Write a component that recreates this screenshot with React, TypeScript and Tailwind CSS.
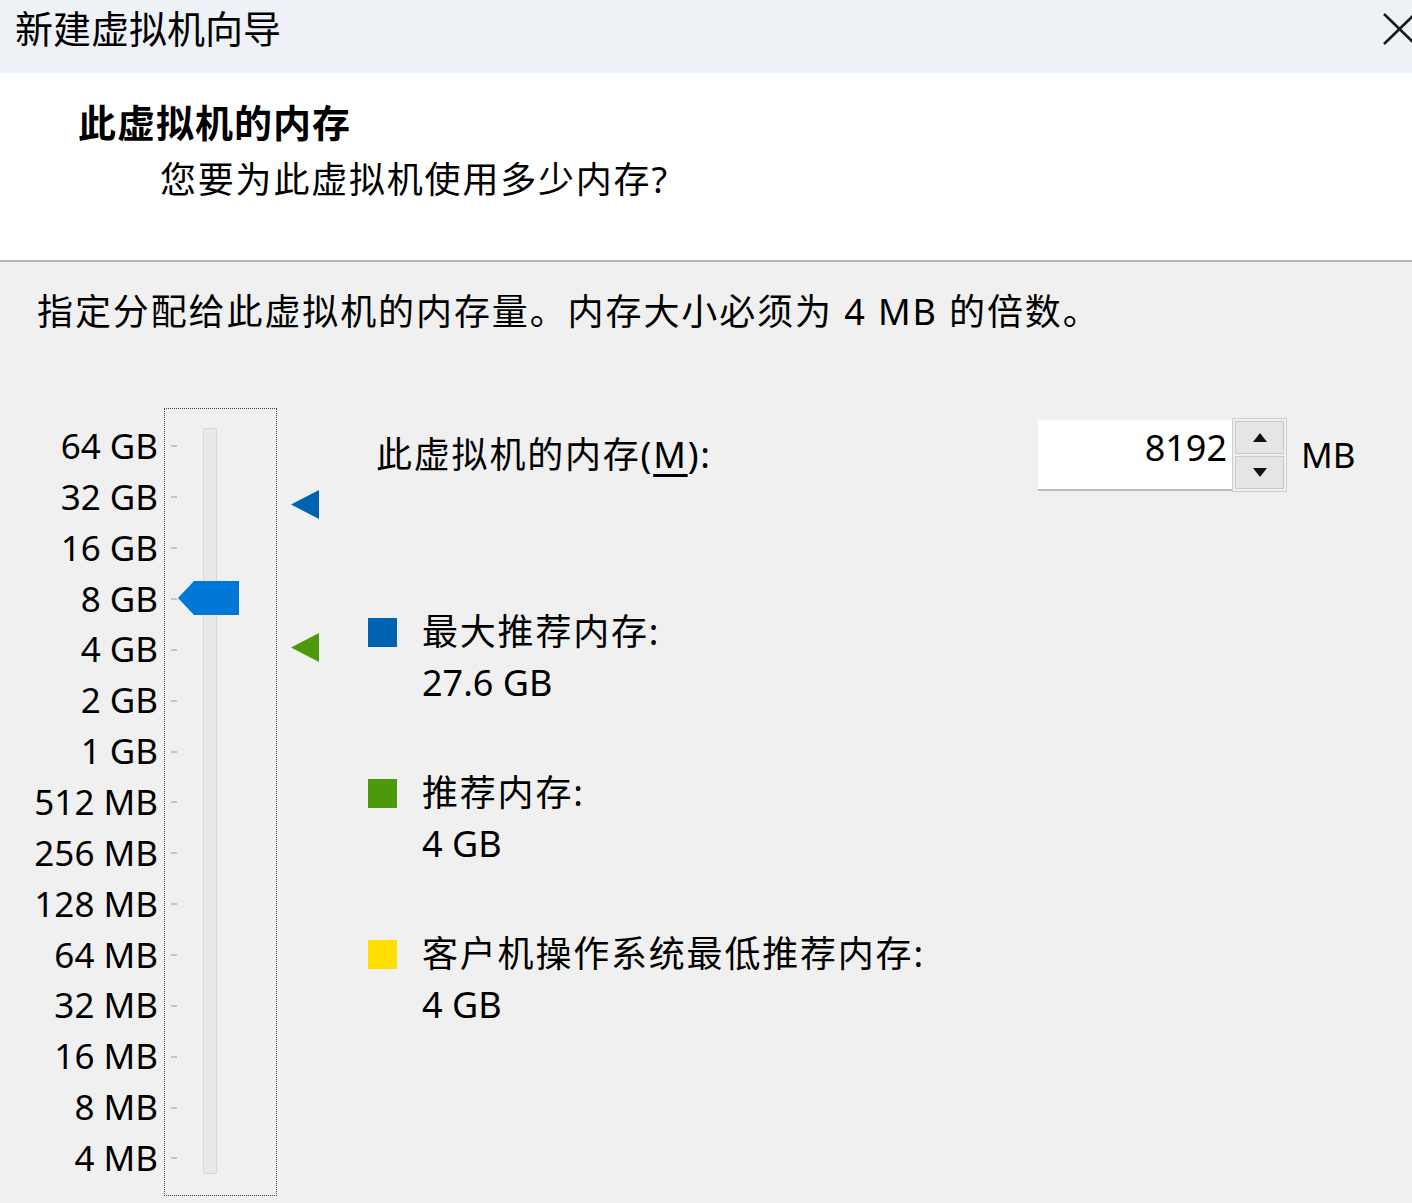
import React from "react";

const scale = [
  "64 GB",
  "32 GB",
  "16 GB",
  "8 GB",
  "4 GB",
  "2 GB",
  "1 GB",
  "512 MB",
  "256 MB",
  "128 MB",
  "64 MB",
  "32 MB",
  "16 MB",
  "8 MB",
  "4 MB",
];

const legend = [
  { color: "bg-[#0063b1]", label: "最大推荐内存:", value: "27.6 GB" },
  { color: "bg-[#4c9a0b]", label: "推荐内存:", value: "4 GB" },
  { color: "bg-[#ffdf00]", label: "客户机操作系统最低推荐内存:", value: "4 GB" },
];

function Marker({ color }: { color: string }) {
  return (
    <svg width="28" height="29" viewBox="0 0 28 29">
      <polygon points="0,14.5 28,0 28,29" fill={color} />
    </svg>
  );
}

export default function App() {
  return (
    <div className="w-[1412px] h-[1203px] overflow-hidden bg-[#f0f0f0] text-black font-['Noto_Sans','Noto_Sans_CJK_SC',sans-serif]">
      {/* title bar */}
      <div className="h-[73px] bg-[#eef2f7] flex items-start justify-between pl-[15px]">
        <div className="text-[38px] leading-[56px]">新建虚拟机向导</div>
        <svg className="mt-[13px] -mr-[4px]" width="33" height="32" viewBox="0 0 33 32">
          <path d="M1 1 L32 31 M32 1 L1 31" stroke="#1a1a1a" strokeWidth="2.6" />
        </svg>
      </div>

      {/* header */}
      <div className="h-[187px] bg-white pt-[25px]">
        <div className="pl-[78px] text-[38px] leading-[48px] font-bold tracking-[1px]">此虚拟机的内存</div>
        <div className="pl-[160px] mt-[10px] text-[36px] leading-[48px] tracking-[1.8px]">
          您要为此虚拟机使用多少内存?
        </div>
      </div>
      <div className="h-[2px] bg-[#b4b4b4]" />

      {/* body */}
      <div className="pt-[26px]">
        <div className="pl-[37px] text-[36px] leading-[48px] tracking-[1.9px]">
          指定分配给此虚拟机的内存量。内存大小必须为 4 MB 的倍数。
        </div>

        <div className="mt-[72px] flex">
          {/* scale labels */}
          <div className="w-[158px] pt-[13px] flex flex-col items-end">
            {scale.map((s) => (
              <div key={s} className="h-[50.86px] leading-[50.86px] text-[35px] whitespace-nowrap">
                {s}
              </div>
            ))}
          </div>

          {/* slider */}
          <div className="ml-[6px] w-[113px] h-[788px] border border-dotted border-[#444] relative">
            <div className="pt-[12px] flex flex-col">
              {scale.map((s) => (
                <div key={s} className="h-[50.86px] flex items-center pl-[6px]">
                  <div className="w-[6px] h-[2px] bg-[#c4c4c4]" />
                </div>
              ))}
            </div>
            <div className="absolute left-[38px] top-[19px] w-[14px] h-[746px] bg-[#e8eaea] border border-[#d6d8d8]" />
            <svg
              className="absolute left-[13px] top-[171px]"
              width="61"
              height="36"
              viewBox="0 0 61 36"
            >
              <polygon points="0,18 16,1 61,1 61,35 16,35" fill="#0078d7" />
            </svg>
          </div>

          {/* markers */}
          <div className="ml-[14px] w-[28px] h-[788px] relative">
            <div className="absolute left-0 top-[82px]">
              <Marker color="#0063b1" />
            </div>
            <div className="absolute left-0 top-[225px]">
              <Marker color="#4c9a0b" />
            </div>
          </div>

          {/* right side */}
          <div className="ml-[49px] flex flex-col">
            <div className="mt-[10px] h-[74px] flex items-center">
              <div className="w-[670px] pl-[8px] text-[36px] leading-[48px] whitespace-nowrap tracking-[1.8px]">
                此虚拟机的内存(<span className="underline underline-offset-[6px]">M</span>):
              </div>
              <div className="flex items-start h-[74px]">
                <div className="mt-[2px] w-[194px] h-[71px] bg-white border-b-2 border-[#bcbcbc] flex justify-end pr-[5px]">
                  <span className="text-[36px] leading-[52px] pt-[2px]">8192</span>
                </div>
                <div className="w-[55px] h-[74px] border border-[#cdcdcd] p-[2px] flex flex-col gap-[2px] bg-[#f0f0f0]">
                  <div className="flex-1 bg-[#e5e5e5] border border-[#c9c9c9] flex items-center justify-center">
                    <svg width="14" height="9" viewBox="0 0 14 9">
                      <polygon points="7,0 14,9 0,9" fill="#111" />
                    </svg>
                  </div>
                  <div className="flex-1 bg-[#e5e5e5] border border-[#c9c9c9] flex items-center justify-center">
                    <svg width="14" height="9" viewBox="0 0 14 9">
                      <polygon points="0,0 14,0 7,9" fill="#111" />
                    </svg>
                  </div>
                </div>
                <div className="ml-[14px] text-[35px] leading-[74px]">MB</div>
              </div>
            </div>

            <div className="mt-[114px] flex flex-col gap-[59px]">
              {legend.map((l) => (
                <div key={l.label} className="flex items-start">
                  <div className={`mt-[12px] w-[29px] h-[29px] ${l.color}`} />
                  <div className="ml-[25px] text-[36px] leading-[51px]">
                    <div className="tracking-[1.8px]">{l.label}</div>
                    <div>{l.value}</div>
                  </div>
                </div>
              ))}
            </div>
          </div>
        </div>
      </div>
    </div>
  );
}
